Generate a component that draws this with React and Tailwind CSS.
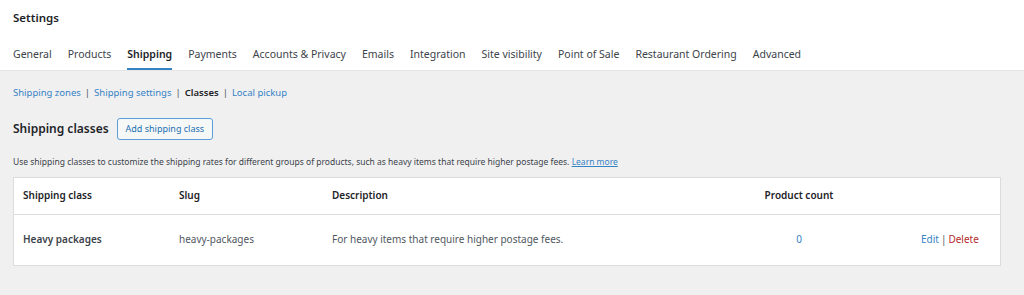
const tabs = [
  'General',
  'Products',
  'Shipping',
  'Payments',
  'Accounts & Privacy',
  'Emails',
  'Integration',
  'Site visibility',
  'Point of Sale',
  'Restaurant Ordering',
  'Advanced',
];

const subLinks = [
  { label: 'Shipping zones' },
  { label: 'Shipping settings' },
  { label: 'Classes', current: true },
  { label: 'Local pickup' },
];

const classes = [
  {
    name: 'Heavy packages',
    slug: 'heavy-packages',
    description: 'For heavy items that require higher postage fees.',
    count: 0,
  },
];

export default function App() {
  return (
    <div
      className="min-h-[295px] bg-[#f0f0f1] text-[#1d2327]"
      style={{ fontFamily: '"Noto Sans", "Open Sans", sans-serif' }}
    >
      {/* Header */}
      <header className="bg-white border-b border-[#e6e6e6]">
        <div className="px-[13px] pt-[10px]">
          <h1 className="text-[11.5px] font-semibold leading-[16px]">Settings</h1>
        </div>
        <nav className="flex gap-[16px] px-[13px] mt-[20px]">
          {tabs.map((tab) => (
            <a
              key={tab}
              href="#"
              className={`text-[10.5px] leading-[16px] pb-[6px] border-b-2 ${
                tab === 'Shipping'
                  ? 'border-[#3582c4] text-[#1d2327] font-semibold'
                  : 'border-transparent text-[#3c434a]'
              }`}
            >
              {tab}
            </a>
          ))}
        </nav>
      </header>

      {/* Main */}
      <main className="px-[13px]">
        <ul className="flex items-center pt-[15px] text-[9.5px] leading-[14px]">
          {subLinks.map((link, i) => (
            <li key={link.label} className="flex items-center">
              {i > 0 && <span className="mx-[4px] text-[#50575e]">|</span>}
              {link.current ? (
                <span className="font-semibold text-[#1d2327]">{link.label}</span>
              ) : (
                <a href="#" className="text-[#3582c4]">
                  {link.label}
                </a>
              )}
            </li>
          ))}
        </ul>

        <div className="flex items-center gap-[8px] mt-[18px]">
          <h2 className="text-[12px] font-semibold leading-[22px]">Shipping classes</h2>
          <button className="h-[22px] px-[8px] border border-[#5b9dd9] rounded-[3px] bg-[#f6f7f7] text-[9px] text-[#2271b1]">
            Add shipping class
          </button>
        </div>

        <p className="mt-[15px] text-[8.5px] leading-[14px] text-[#3c434a]">
          Use shipping classes to customize the shipping rates for different groups of products, such as heavy
          items that require higher postage fees.{' '}
          <a href="#" className="text-[#3582c4] underline">
            Learn more
          </a>
        </p>

        <div className="mt-[8px] w-[988px] bg-white border border-[#dcdcde]">
          <table className="w-full text-[10px] border-collapse">
            <thead>
              <tr className="h-[36px] border-b border-[#dcdcde] text-left">
                <th className="w-[165px] pl-[9px] font-semibold">Shipping class</th>
                <th className="w-[153px] font-semibold">Slug</th>
                <th className="w-[381px] font-semibold">Description</th>
                <th className="w-[172px] text-center font-semibold">Product count</th>
                <th></th>
              </tr>
            </thead>
            <tbody>
              {classes.map((c) => (
                <tr key={c.slug} className="h-[51px]">
                  <td className="pl-[9px] font-semibold text-[#3c434a]">{c.name}</td>
                  <td className="text-[#50575e]">{c.slug}</td>
                  <td className="text-[#50575e]">{c.description}</td>
                  <td className="text-center text-[#3582c4]">{c.count}</td>
                  <td className="pl-[36px]">
                    <a href="#" className="text-[#3582c4]">
                      Edit
                    </a>
                    <span className="mx-[2px] text-[#50575e]">|</span>
                    <a href="#" className="text-[#b32d2e]">
                      Delete
                    </a>
                  </td>
                </tr>
              ))}
            </tbody>
          </table>
        </div>
      </main>
    </div>
  );
}
